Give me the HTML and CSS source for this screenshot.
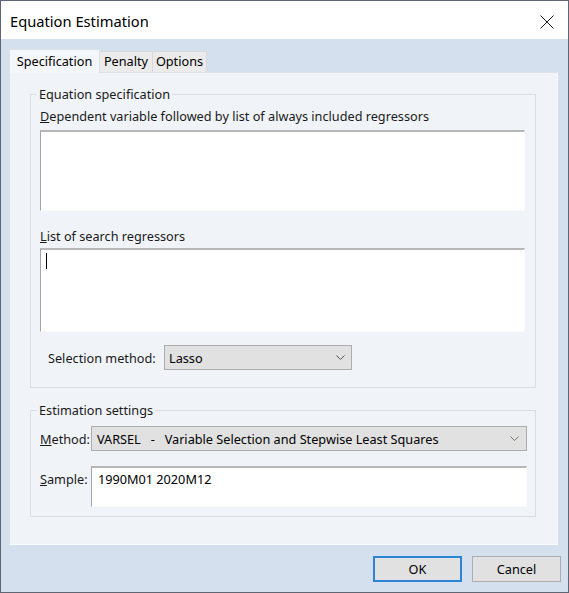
FILE: index.html
```html
<!DOCTYPE html>
<html>
<head>
<meta charset="utf-8">
<link rel="stylesheet" href="styles.css">
</head>
<body>
<div class="window">
  <div class="titlebar">
    <span class="title">Equation Estimation</span>
    <svg class="close" width="14" height="14" viewBox="0 0 14 14"><path d="M0.5 0.5 L13.5 13.5 M13.5 0.5 L0.5 13.5" stroke="#1a1a1a" stroke-width="1" fill="none"/></svg>
  </div>
  <div class="client">
    <div class="tabs">
      <div class="tab active">Specification</div>
      <div class="tab">Penalty</div>
      <div class="tab">Options</div>
    </div>
    <div class="panel">
      <fieldset class="group g1">
        <legend>Equation specification</legend>
        <div class="group-body">
          <div class="label"><u>D</u>ependent variable followed by list of always included regressors</div>
          <div class="textbox tb1"></div>
          <div class="label l2"><u>L</u>ist of search regressors</div>
          <div class="textbox tb2"><span class="caret"></span></div>
          <div class="sel-row">
            <span class="sel-label">Selection method:</span>
            <div class="select sel-small"><span>Lasso</span><svg class="chev" width="9" height="5" viewBox="0 0 9 5"><path d="M0.5 0.5 L4.5 4.5 L8.5 0.5" stroke="#555" stroke-width="1" fill="none"/></svg></div>
          </div>
        </div>
      </fieldset>
      <fieldset class="group g2">
        <legend>Estimation settings</legend>
        <div class="group-body2">
          <div class="row">
            <span class="row-label"><u>M</u>ethod:</span>
            <div class="select sel-wide"><span>VARSEL&nbsp;&nbsp; -&nbsp;&nbsp; Variable Selection and Stepwise Least Squares</span><svg class="chev" width="9" height="5" viewBox="0 0 9 5"><path d="M0.5 0.5 L4.5 4.5 L8.5 0.5" stroke="#777" stroke-width="1" fill="none"/></svg></div>
          </div>
          <div class="row row-sample">
            <span class="row-label sample-label"><u>S</u>ample:</span>
            <div class="textbox sample">1990M01 2020M12</div>
          </div>
        </div>
      </fieldset>
    </div>
    <div class="footer">
      <div class="btn ok">OK</div>
      <div class="btn">Cancel</div>
    </div>
  </div>
</div>
</body>
</html>
```
FILE: styles.css
```css
* { box-sizing: border-box; }
html, body { margin: 0; padding: 0; background: #ffffff; }
body { font-family: "Noto Sans", "DejaVu Sans", sans-serif; font-size: 12.7px; color: #000; }

.window {
  width: 569px; height: 593px;
  border: 1px solid #5d6672;
  display: flex; flex-direction: column;
  background: #d5e0ee;
}
.titlebar {
  height: 38px; background: #ffffff;
  display: flex; align-items: center;
  padding-left: 9px;
}
.title { font-size: 14.7px; color: #000; line-height: 20px; margin-top: 1px; }
.close { margin-left: auto; margin-right: 14px; margin-top: 3px; }

.client {
  flex: 1;
  display: flex; flex-direction: column;
  padding: 10px 9px 10px 8px;
}
.tabs { display: flex; align-items: flex-end; height: 23px; position: relative; z-index: 1; }
.tab {
  height: 21px; line-height: 19px;
  padding: 0 5px;
  background: #ebebeb;
  border: 1px solid #d9d9d9; border-bottom: none;
  color: #000;
}
.tab + .tab { border-left: none; }
.tab.active {
  height: 24px; line-height: 22px;
  width: 91px; padding: 0; text-align: center;
  background: #f3f6fa; border-color: #dde2e8;
  margin-bottom: -1px;
}
.tabs .tab:nth-child(2) { width: 53px; text-align: center; padding: 0; }
.tabs .tab:nth-child(3) { width: 54px; text-align: center; padding: 0; }

.panel {
  width: 549px; height: 473px;
  background: #f0f3f8;
  border: 1px solid #dde2e8;
  border-right-color: #fbfcfd; border-bottom-color: #fbfcfd;
  padding: 13px 0 0 20px;
}

.group {
  margin: 0; padding: 0;
  border: 1px solid #dadee4;
  width: 506px;
  min-width: 0;
}
.group legend {
  margin-left: 6px; padding: 0 2px;
  line-height: 16px; color: #1a1a1a;
}
.group-body { padding: 6px 0 17px 9px; }
.label { line-height: 16px; color: #1a1a1a; white-space: nowrap; }
.label.l2 { margin-top: 17px; }
.textbox {
  background: #ffffff;
  border-top: 2px solid #b7b7b7;
  border-left: 1px solid #a4a4a4;
  border-right: 1px solid #fafafa;
  border-bottom: 1px solid #fafafa;
  width: 485px;
}
.tb1 { margin-top: 6px; height: 81px; }
.tb2 { margin-top: 4px; height: 84px; padding: 3px 0 0 5px; }
.caret { display: block; width: 1px; height: 16px; background: #000; }

.sel-row { display: flex; align-items: center; margin-top: 13px; padding-left: 8px; }
.sel-label { width: 116px; color: #1a1a1a; white-space: nowrap; }
.select {
  height: 25px; background: #e1e1e1;
  border: 1px solid #adadad;
  display: flex; align-items: center;
  padding-left: 4px; padding-right: 6px;
  color: #000; white-space: nowrap;
}
.select .chev { margin-left: auto; flex: none; }
.sel-small { width: 188px; }

.g2 { margin-top: 14px; }
.group-body2 { padding: 8px 0 9px 9px; }
.row { display: flex; align-items: center; }
.row-label { width: 51px; color: #1a1a1a; white-space: nowrap; }
.sel-wide { width: 436px; padding-left: 5px; padding-right: 7px; }
.row-sample { margin-top: 15px; align-items: flex-start; }
.sample-label { margin-top: 5px; line-height: 16px; }
.textbox.sample { width: 436px; height: 41px; padding: 3px 0 0 6px; line-height: 16px; }

.footer {
  display: flex; justify-content: flex-end; gap: 10px;
  margin-top: 11px; padding-right: 0; margin-right: -2px;
}
.btn {
  width: 89px; height: 26px;
  background: #e1e1e1; border: 1px solid #adadad;
  display: flex; align-items: center; justify-content: center;
  color: #000;
}
.btn.ok { border: 2px solid #2b84d6; }
```
